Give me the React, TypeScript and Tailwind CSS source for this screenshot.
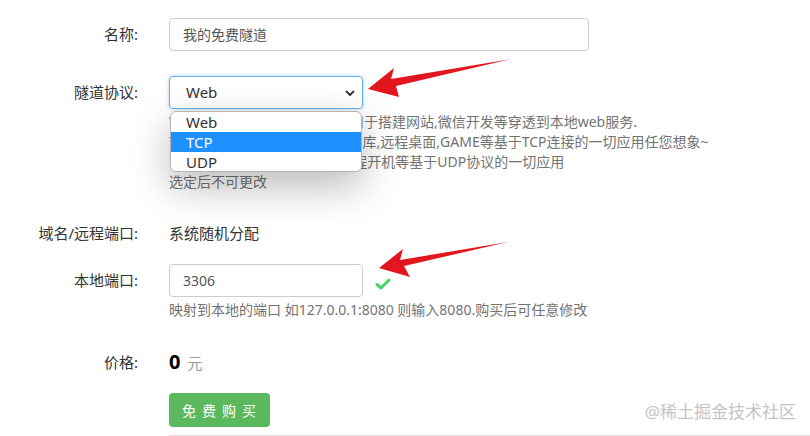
import React from "react";

const font = "font-['Noto_Sans','Noto_Sans_CJK_SC',sans-serif]";

const Label = ({ children }: { children: React.ReactNode }) => (
  <div className="w-[138px] shrink-0 text-right text-[15px] text-[#333]">{children}</div>
);

const Arrow = ({ d }: { d: string }) => (
  <svg className="pointer-events-none absolute inset-0" width="810" height="436">
    <polygon points={d} fill="#e3161f" />
  </svg>
);

const App = () => {
  return (
    <div className={`relative h-[436px] w-[810px] overflow-hidden bg-white ${font}`}>
      <div className="flex flex-col">
        {/* 名称 */}
        <div className="mt-[18px] flex items-center">
          <Label>名称:</Label>
          <div className="ml-[31px] flex h-[33px] w-[420px] items-center rounded-[4px] border border-[#ccc] px-[13px] text-[14px] text-[#555]">
            我的免费隧道
          </div>
        </div>

        {/* 隧道协议 */}
        <div className="mt-[25px] flex items-center">
          <Label>隧道协议:</Label>
          <div className="relative ml-[31px]">
            <div className="flex h-[33px] w-[194px] items-center justify-between rounded-[4px] border border-[#66afe9] pl-[16px] pr-[6px] text-[15px] text-[#333] shadow-[0_0_4px_rgba(102,175,233,0.5)]">
              <span>Web</span>
              <svg width="12" height="12" viewBox="0 0 12 12">
                <path d="M2.5 4.5 L6 8 L9.5 4.5" fill="none" stroke="#333" strokeWidth="1.8" strokeLinecap="round" strokeLinejoin="round" />
              </svg>
            </div>
            <div className="absolute left-[1px] top-[35px] z-10 w-[192px] overflow-hidden rounded-[6px] border border-[#b5b5b5] bg-white text-[15px] leading-[20px] text-[#333] shadow-[0_14px_40px_rgba(0,0,0,0.28)]">
              <div className="h-[20px] pl-[15px]">Web</div>
              <div className="h-[20px] bg-[#1e90ff] pl-[15px] text-white">TCP</div>
              <div className="h-[19px] pl-[15px]">UDP</div>
            </div>
          </div>
        </div>
        <div className="mt-[3px] flex">
          <div className="w-[169px] shrink-0" />
          <div className="flex flex-col text-[14px] leading-[20px] text-[#737373]">
            <span className="whitespace-pre">WEB： 网站类型隧道, 一般适用于搭建网站,微信开发等穿透到本地web服务.</span>
            <span className="whitespace-pre">TCP： SSH, SFTP, MySQL, 数据库,远程桌面,GAME等基于TCP连接的一切应用任您想象~</span>
            <span className="whitespace-pre">UDP： 游戏联机, DNS解析,远程开机等基于UDP协议的一切应用</span>
            <span>选定后不可更改</span>
          </div>
        </div>

        {/* 域名/远程端口 */}
        <div className="mt-[31px] flex h-[20px] items-center">
          <Label>域名/远程端口:</Label>
          <div className="ml-[31px] text-[15px] text-[#333]">系统随机分配</div>
        </div>

        {/* 本地端口 */}
        <div className="mt-[21px] flex items-center">
          <Label>本地端口:</Label>
          <div className="ml-[31px] flex h-[33px] w-[194px] items-center rounded-[4px] border border-[#ccc] px-[13px] text-[14px] text-[#555]">
            3306
          </div>
          <svg className="ml-[12px] mt-[6px]" width="16" height="14" viewBox="0 0 16 14">
            <path d="M2 7.5 L6 11 L14 3" fill="none" stroke="#4cd06a" strokeWidth="3" strokeLinecap="round" strokeLinejoin="round" />
          </svg>
        </div>
        <div className="mt-[3px] flex">
          <div className="w-[169px] shrink-0" />
          <div className="text-[14px] leading-[20px] text-[#737373]">
            映射到本地的端口 如127.0.0.1:8080 则输入8080.购买后可任意修改
          </div>
        </div>

        {/* 价格 */}
        <div className="mt-[30px] flex h-[24px] items-center">
          <Label>价格:</Label>
          <div className="ml-[31px] flex items-baseline gap-[7px]">
            <span className="text-[20px] font-bold text-black">0</span>
            <span className="text-[15px] text-[#999]">元</span>
          </div>
        </div>

        <div className="mt-[19px] flex">
          <div className="w-[169px] shrink-0" />
          <button className="flex h-[34px] w-[101px] items-center justify-center rounded-[4px] bg-[#5cb85c] pl-[5px] text-[14px] tracking-[6px] text-white">
            免费购买
          </button>
        </div>

        <div className="ml-[169px] mt-[8px] border-t border-[#ead8dc]" />
      </div>

      <Arrow d="368,89 394,68 391,79 511,59 396,86 399,97" />
      <Arrow d="379,268 403,249 400,260 508,242 404,266 410,277" />

      <div className="absolute right-[14px] top-[399px] text-[17px] text-[#c4c4c4]">@稀土掘金技术社区</div>
    </div>
  );
};

export default App;
